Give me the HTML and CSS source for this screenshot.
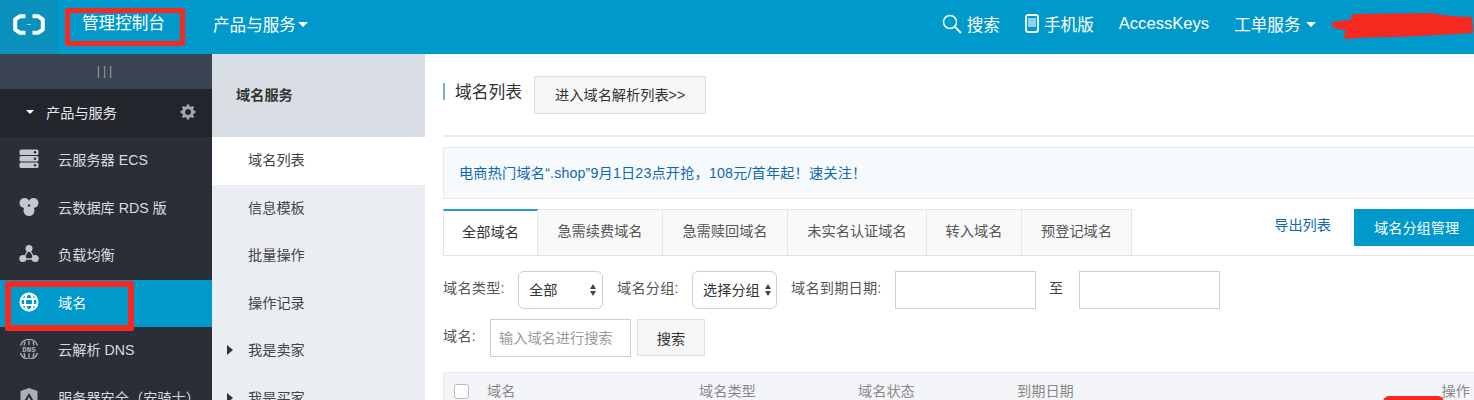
FILE: index.html
```html
<!DOCTYPE html>
<html lang="zh-CN">
<head>
<meta charset="utf-8">
<title>域名列表</title>
<link rel="stylesheet" href="styles.css">
</head>
<body>
<header class="top">
  <div class="logo">
    <svg width="32" height="21" viewBox="0 0 32 21"><path d="M12.500 2.200H7L2.200 5.500V15.500L7 18.800H12.500M19.500 2.200H25L29.800 5.500V15.500L25 18.800H19.500" fill="none" stroke="#fff" stroke-width="4" stroke-linejoin="round"/><path d="M14 10.500H18" stroke="#fff" stroke-opacity=".6" stroke-width="1"/></svg>
  </div>
  <a class="top-title">管理控制台</a>
  <a class="top-menu">产品与服务<i class="caret"></i></a>
  <nav class="top-right">
    <a class="top-item">
      <svg width="20" height="20" viewBox="0 0 20 20"><circle cx="8" cy="8" r="6.500" fill="none" stroke="#fff" stroke-width="1.500"/><path d="M12.700 12.700L19 19" stroke="#fff" stroke-width="1.800"/></svg>
      搜索</a>
    <a class="top-item">
      <svg width="14" height="19" viewBox="0 0 14 19"><rect x="1" y="1" width="12" height="17" rx="2" fill="none" stroke="#fff" stroke-width="1.800"/><rect x="3" y="4" width="8" height="9" fill="#8fd0ea"/></svg>
      手机版</a>
    <a class="top-item">AccessKeys</a>
    <a class="top-item">工单服务<i class="caret"></i></a>
    <div class="top-user"></div>
  </nav>
</header>
<div class="app">
  <aside class="side">
    <div class="side-toggle">|||</div>
    <div class="side-group"><i class="caret caret-small"></i><span class="side-group-label">产品与服务</span>
      <svg class="gear" width="16" height="16" viewBox="0 0 16 16"><circle cx="8" cy="8" r="4.500" fill="none" stroke="#a4a9ae" stroke-width="3"/><path d="M8 0.500V15.500M0.500 8H15.500M2.700 2.700L13.300 13.300M13.300 2.700L2.700 13.300" stroke="#a4a9ae" stroke-width="2.600" stroke-dasharray="2.800 9.400"/></svg>
    </div>
    <a class="side-item">
      <svg class="side-icon" width="20" height="20" viewBox="0 0 20 20"><g fill="#c3c8ce"><rect x="0.500" y="0.500" width="19" height="5.400" rx="1.500"/><rect x="0.500" y="7" width="19" height="5.400" rx="1.500"/><rect x="0.500" y="13.500" width="19" height="5.400" rx="1.500"/></g><g fill="#292e37"><circle cx="16" cy="3.200" r="1.200"/><circle cx="16" cy="9.700" r="1.200"/><circle cx="16" cy="16.200" r="1.200"/></g></svg>
      云服务器 ECS</a>
    <a class="side-item">
      <svg class="side-icon" width="20" height="20" viewBox="0 0 20 20"><g fill="#c3c8ce"><circle cx="5.500" cy="6" r="5"/><circle cx="14.500" cy="6" r="5"/><circle cx="10" cy="13.500" r="5.500"/></g><circle cx="10" cy="8.500" r="1.200" fill="#292e37"/></svg>
      云数据库 RDS 版</a>
    <a class="side-item">
      <svg class="side-icon" width="20" height="20" viewBox="0 0 20 20"><path d="M10 5L4 15H16Z" fill="none" stroke="#c3c8ce" stroke-width="1.300"/><g fill="#c3c8ce"><circle cx="10" cy="4.500" r="3.500"/><circle cx="3.800" cy="14.500" r="3.500"/><circle cx="16.200" cy="14.500" r="3.500"/></g></svg>
      负载均衡</a>
    <a class="side-item side-item-active">
      <svg class="side-icon" width="20" height="20" viewBox="0 0 20 20"><g fill="none" stroke="#fff" stroke-width="2"><circle cx="10" cy="10" r="8.500"/><ellipse cx="10" cy="10" rx="4" ry="8.500"/><path d="M2 7H18M2 13H18"/></g></svg>
      域名</a>
    <a class="side-item">
      <svg class="side-icon" width="20" height="20" viewBox="0 0 20 20"><g fill="none" stroke="#aab0b6" stroke-width="1.300"><path d="M1.500 6.500A9 9 0 0 1 18.500 6.500M1.500 14A9 9 0 0 0 18.500 14"/><path d="M10 1.500V6M10 14.500V19M6 2.500L5 6.500M14 2.500L15 6.500M6 18L5 14M14 18L15 14"/></g><text class="dns-text" x="10" y="13.200">DNS</text></svg>
      云解析 DNS</a>
    <a class="side-item">
      <svg class="side-icon" width="20" height="20" viewBox="0 0 20 20"><path d="M10 1L18.500 4V13L10 19L1.500 13V4Z" fill="#aab0b6"/><path d="M10 6L5.500 13.500H8L10 10L12 13.500H14.500Z" fill="#292e37"/></svg>
      服务器安全（安骑士）</a>
  </aside>
  <aside class="sub">
    <div class="sub-head">域名服务</div>
    <a class="sub-item sub-item-active">域名列表</a>
    <a class="sub-item">信息模板</a>
    <a class="sub-item">批量操作</a>
    <a class="sub-item">操作记录</a>
    <a class="sub-item"><i class="tri"></i>我是卖家</a>
    <a class="sub-item"><i class="tri"></i>我是买家</a>
  </aside>
  <main class="main">
    <div class="title-row">
      <h1 class="title">域名列表</h1>
      <button class="btn btn-title">进入域名解析列表&gt;&gt;</button>
    </div>
    <div class="notice">电商热门域名“.shop”9月1日23点开抢，108元/首年起！速关注！</div>
    <div class="tabs">
      <a class="tab tab-active tab-w1">全部域名</a>
      <a class="tab tab-w2">急需续费域名</a>
      <a class="tab tab-w2">急需赎回域名</a>
      <a class="tab tab-w3">未实名认证域名</a>
      <a class="tab tab-w1">转入域名</a>
      <a class="tab tab-w4">预登记域名</a>
      <div class="tabs-actions">
        <a class="export">导出列表</a>
        <button class="btn-primary">域名分组管理</button>
      </div>
    </div>
    <form class="filters">
      <div class="filter-row">
        <label class="filter-label">域名类型:</label>
        <span class="sel sel-first"><select class="sel-input"><option>全部</option></select></span>
        <label class="filter-label filter-gap">域名分组:</label>
        <span class="sel"><select class="sel-input"><option>选择分组</option></select></span>
        <label class="filter-label filter-gap">域名到期日期:</label>
        <input class="text-input date-input" type="text">
        <span class="date-sep">至</span>
        <input class="text-input date-input" type="text">
      </div>
      <div class="filter-row filter-row-2">
        <label class="filter-label">域名:</label>
        <input class="text-input search-input" type="text" placeholder="输入域名进行搜索">
        <button class="btn btn-search" type="button">搜索</button>
      </div>
    </form>
    <div class="thead">
      <span class="check"></span>
      <span class="th th-name">域名</span>
      <span class="th th-type">域名类型</span>
      <span class="th th-status">域名状态</span>
      <span class="th th-date">到期日期</span>
      <span class="th th-op">操作</span>
    </div>
  </main>
</div>
<div class="mark mark-title"></div>
<div class="mark mark-side"></div>
<div class="mark-bottom"></div>
<svg class="scribble" width="142" height="30" viewBox="0 0 142 30"><path d="M0 11Q1 9 18 8L21 2L100 1Q110 4 140 5L141 21Q90 24 60 25Q30 25 16 27Q9 28 14 18Q2 17 0 14Z" fill="#f5291f"/></svg>
</body>
</html>
```
FILE: styles.css
```css
* { box-sizing: border-box; }
html, body { margin: 0; height: 400px; overflow: hidden; background: #fff; }
body {
  position: relative;
  font-family: "Liberation Sans", "Noto Sans CJK SC", sans-serif;
  font-size: 14.2px;
  color: #333;
}
a { color: inherit; text-decoration: none; display: block; }
i { display: inline-block; font-style: normal; }

/* Top bar */
.top { display: flex; height: 54px; background: #0099cc; color: #fff; font-size: 16.6px; align-items: stretch; }
.logo { width: 58px; background: #0a90bd; display: flex; align-items: center; justify-content: center; padding-bottom: 6px; }
.top-title { width: 155px; padding-left: 24px; line-height: 48px; }
.top-menu { display: flex; align-items: center; gap: 2px; padding-bottom: 7px; }
.caret { width: 0; height: 0; border-left: 5px solid transparent; border-right: 5px solid transparent; border-top: 5px solid #fff; margin-top: 2px; }
.caret-small { border-left-width: 4px; border-right-width: 4px; border-top-width: 4px; margin: 0; }
.top-right { display: flex; margin-left: auto; align-items: stretch; }
.top-item { display: flex; align-items: center; gap: 5px; padding: 0 12.500px 7px; }
.top-user { width: 146px; }

/* Layout */
.app { display: flex; height: 346px; overflow: hidden; }
.side { width: 212px; flex: none; background: #292e37; color: #d7dbe0; }
.side-toggle { height: 35px; background: #3a4452; color: #9aa3ae; text-align: center; line-height: 34px; font-size: 12px; letter-spacing: 3px; }
.side-group { height: 48px; background: #22252b; color: #e6e8eb; display: flex; align-items: center; padding: 0 16px 2px 26px; }
.side-group-label { margin-left: 12px; }
.gear { margin-left: auto; }
.side-item { height: 47.500px; display: flex; align-items: center; padding: 0 0 3px 19px; }
.side-icon { flex: none; margin-right: 19px; }
.side-item-active { background: #0099cc; color: #fff; }
.dns-text { font-family: "Liberation Mono", monospace; font-size: 7.500px; font-weight: 700; fill: #aab0b6; text-anchor: middle; }

.sub { width: 213px; flex: none; background: #eaedf1; color: #444; }
.sub-head { height: 83px; background: #d9dee4; font-weight: 700; line-height: 82px; padding-left: 24px; color: #333; }
.sub-item { height: 47.500px; line-height: 46px; padding-left: 36px; position: relative; }
.sub-item-active { background: #fff; }
.tri { position: absolute; left: 15px; top: 18px; border-top: 5.500px solid transparent; border-bottom: 5.500px solid transparent; border-left: 6px solid #333; }

/* Main */
.main { flex: 1; min-width: 0; padding: 22px 0 0 18px; }
.title-row { display: flex; align-items: flex-start; height: 61px; border-bottom: 2px solid #e9ebee; }
.title { margin: 7px 0 0; font-size: 16.800px; font-weight: 400; line-height: 19px; height: 17px; border-left: 2px solid #6fb3d6; padding-left: 10px; white-space: nowrap; }
.btn { background: #f6f6f6; border: 1px solid #dcdfe3; font: inherit; color: #333; }
.btn-title { width: 172px; height: 38px; margin-left: 12px; padding: 0 0 2px; }
.notice { height: 52px; margin-top: 10px; background: #f6fafd; border: 1px solid #e6eaee; border-right: 0; padding-left: 15px; line-height: 50px; color: #1068b0; letter-spacing: 0.170px; white-space: nowrap; }

.tabs { display: flex; height: 47px; margin-top: 10px; border-bottom: 1px solid #dfe2e6; }
.tab { height: 46px; background: #f9f9f9; border: 1px solid #e3e5e8; border-left: 0; border-bottom: 0; text-align: center; line-height: 43px; color: #555; }
.tab-active { background: #fff; color: #333; border-top: 2px solid #1f9fc5; border-left: 1px solid #e3e5e8; line-height: 42px; }
.tab-w1 { width: 95px; }
.tab-w2 { width: 125px; }
.tab-w3 { width: 139px; }
.tab-w4 { width: 110px; }
.tabs-actions { display: flex; margin-left: auto; align-items: flex-start; }
.export { color: #1068b0; line-height: 32px; margin-right: 23px; }
.btn-primary { width: 120px; height: 37px; background: #0099cc; border: 0; color: #fff; font: inherit; text-align: left; padding: 0 0 1px 20px; }

.filters { padding-top: 15px; }
.filter-row { display: flex; align-items: flex-start; height: 38px; }
.filter-row-2 { margin-top: 10px; }
.filter-label { color: #555; line-height: 34px; letter-spacing: 0.200px; white-space: nowrap; }
.filter-row .filter-label:first-child { width: 75px; }
.filter-row-2 .filter-label:first-child { width: 47px; }
.filter-gap { margin-left: 14px; width: 75px; }
.filter-gap:nth-of-type(3) { width: 104px; }
.sel { position: relative; display: block; width: 85px; height: 38px; }
.sel::before, .sel::after { content: ""; position: absolute; right: 6px; border-left: 3px solid transparent; border-right: 3px solid transparent; }
.sel-first::before, .sel-first::after { right: 7px; }
.sel::before { top: 13px; border-bottom: 5px solid #444; }
.sel::after { top: 20px; border-top: 5px solid #444; }
.sel-input { appearance: none; width: 100%; height: 100%; background: #fff; border: 1px solid #ccd0d4; border-radius: 6px; padding: 0 0 0 10px; font: inherit; color: #333; }
.text-input { height: 38px; background: #fff; border: 1px solid #ccd0d4; font: inherit; padding: 0 8px; margin: 0; }
.text-input::placeholder { color: #9a9a9a; opacity: 1; }
.date-input { width: 141px; }
.date-sep { width: 43px; padding-left: 13px; line-height: 34px; color: #444; }
.search-input { width: 141px; }
.btn-search { width: 68px; height: 37px; margin-left: 6px; padding: 0; }

.thead { position: relative; display: flex; height: 60px; margin-top: 15px; background: #f4f5f8; border: 1px solid #e8eaed; border-right: 0; color: #888; }
.check { position: absolute; left: 10px; top: 11px; width: 15px; height: 15px; background: #fff; border: 1px solid #bbb; border-radius: 3px; }
.th { position: absolute; top: 9px; line-height: 18px; }
.th-name { left: 43px; }
.th-type { left: 255px; }
.th-status { left: 414px; }
.th-date { left: 573px; }
.th-op { right: 4px; }

/* Red annotations drawn over the page */
.mark { position: absolute; border: 5px solid #f5291f; border-radius: 2px; }
.mark-title { left: 65px; top: 8px; width: 120px; height: 38px; }
.mark-side { left: 5px; top: 281px; width: 129px; height: 50px; border-width: 6px; }
.mark-bottom { position: absolute; left: 1383px; top: 396px; width: 61px; height: 8px; background: #f5291f; border-radius: 6px 6px 0 0; }
.scribble { position: absolute; left: 1332px; top: 12px; }
```
